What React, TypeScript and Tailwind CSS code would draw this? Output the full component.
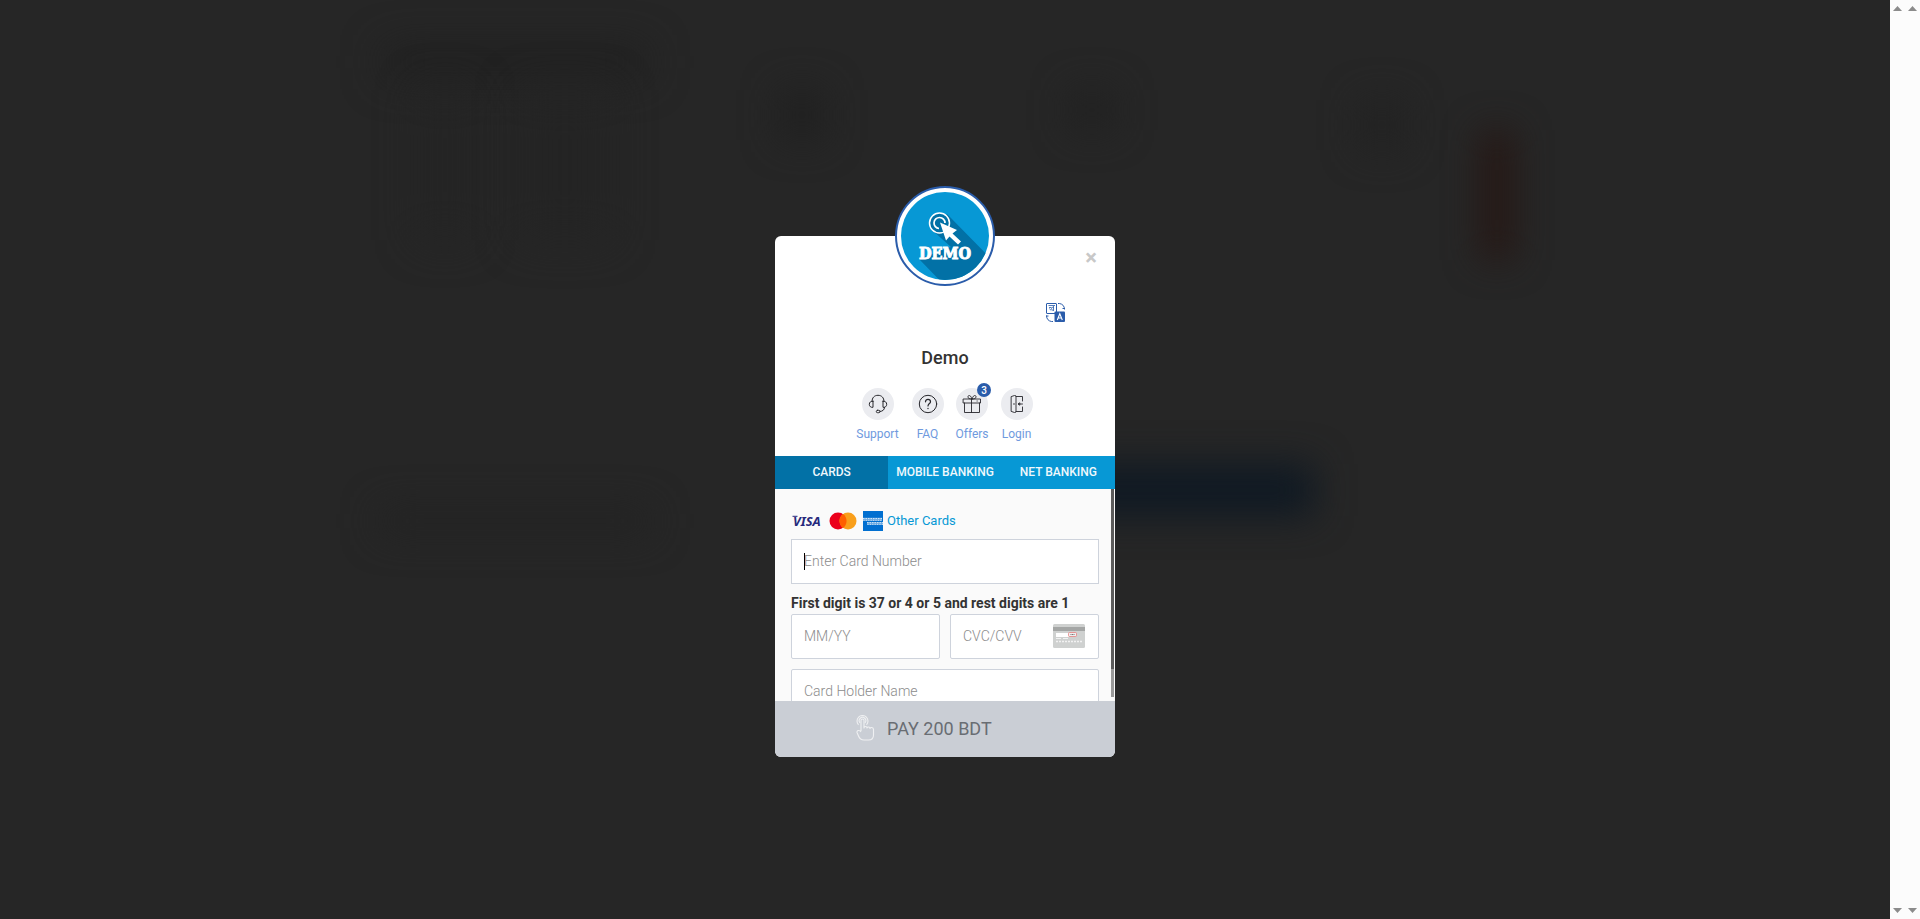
import React from "react";

const font = "font-['Roboto','Liberation_Sans',sans-serif]";

function Backdrop() {
  return (
    <div aria-hidden="true" className="pointer-events-none absolute inset-0 overflow-hidden">
      <div className="absolute left-[385px] top-[48px] h-[28px] w-[260px] bg-[#1f1f1f] blur-[20px]" />
      <div className="absolute left-[780px] top-[90px] h-[50px] w-[44px] bg-[#202020] blur-[18px]" />
      <div className="absolute left-[1070px] top-[90px] h-[40px] w-[44px] bg-[#212121] blur-[18px]" />
      <div className="absolute left-[1360px] top-[100px] h-[50px] w-[44px] bg-[#222222] blur-[18px]" />
      <div className="absolute left-[420px] top-[90px] h-[150px] w-[50px] bg-[#242424] blur-[20px]" />
      <div className="absolute left-[520px] top-[90px] h-[150px] w-[90px] bg-[#242424] blur-[20px]" />
      <div className="absolute left-[1480px] top-[130px] h-[130px] w-[34px] bg-[#261815] blur-[17px]" />
      <div className="absolute left-[1030px] top-[464px] h-[52px] w-[284px] bg-[#0f1923] blur-[18px]" />
      <div className="absolute left-[380px] top-[508px] h-[26px] w-[270px] bg-[#232323] blur-[18px]" />
    </div>
  );
}

function Logo() {
  return (
    <div className="absolute left-1/2 top-0 size-[100px] -translate-x-1/2 -translate-y-1/2 rounded-full border-2 border-[#2a5caa] bg-white p-1">
      <svg viewBox="0 0 88 88" className="size-full" role="img" aria-label="Demo">
        <defs>
          <clipPath id="disc"><circle cx="44" cy="44" r="44" /></clipPath>
        </defs>
        <circle cx="44" cy="44" r="44" fill="#0798d5" />
        <g clipPath="url(#disc)">
          <path d="M46 22 100 77V100H50L18 67 50 55 31 38Z" fill="#0271a6" />
        </g>
        <circle cx="38.500" cy="31" r="10" fill="#0271a6" stroke="#fff" strokeWidth="1.500" />
        <path d="M38 36.500A5.500 5.500 0 1 1 44 31" fill="none" stroke="#fff" strokeWidth="1.700" />
        <path d="M39 30.500 56 38 51.500 41.500 60 49.500 57 52.500 48.500 44.500 45 48.500Z" fill="#fff" />
        <text x="44" y="67" textAnchor="middle" fill="#fff" stroke="#fff" strokeWidth="0.900" className="font-['DejaVu_Serif_Condensed','DejaVu_Serif',serif] text-[16px] font-bold">DEMO</text>
      </svg>
    </div>
  );
}

function TranslateIcon() {
  return (
    <svg viewBox="0 0 19 19" className="size-[19px]" fill="none" stroke="#2a5caa" strokeWidth="1">
      <rect x="0.500" y="0.500" width="10" height="10" rx="0.500" />
      <path d="M2.500 2.500H9M3 4.500H5.500M7.500 3V8M3.500 5.500 5 7.500M7.500 4.500C5 3.500 5 7 7 7.500" strokeWidth="0.800" />
      <path d="M12 0.500H13.500C16.500 1 18.500 3 18.500 6.500M16.500 5.500H19" />
      <path d="M7 18.500H5.500C2.500 18 0.500 16 0.500 12.500M0 13H2.500" />
      <rect x="8.500" y="8.500" width="10.500" height="10.500" rx="1" fill="#2a5caa" stroke="none" />
      <path d="M11.300 17 13.800 10.800 16.300 17M12.100 15H15.500" stroke="#fff" strokeWidth="1.100" />
    </svg>
  );
}

const iconProps = {
  viewBox: "0 0 20 20",
  className: "size-5",
  fill: "none",
  stroke: "#26262b",
  strokeWidth: 1,
  strokeLinecap: "round" as const,
  strokeLinejoin: "round" as const,
};

function SupportIcon() {
  return (
    <svg {...iconProps}>
      <path d="M4 7.500C4 3.500 6.500 1.300 10 1.300S16 3.500 16 7.500" />
      <path d="M5 7.200V13.300C3 13.600 1.300 12.500 1.300 10.300S3 7 5 7.200ZM15 7.200V13.300C17 13.600 18.700 12.500 18.700 10.300S17 7 15 7.200ZM16.500 13.500C16.500 16 14.500 17.300 12 17.500" />
      <rect x="8.300" y="16.300" width="3.700" height="2.400" rx="1.200" />
    </svg>
  );
}

function FaqIcon() {
  return (
    <svg {...iconProps}>
      <circle cx="10" cy="10" r="8.700" />
      <path d="M7.500 7.800C7.500 6.200 8.600 5.300 10 5.300S12.500 6.200 12.500 7.700C12.500 9.500 10 9.700 10 12" strokeWidth="1.200" />
      <path d="M10 14.300V14.600" strokeWidth="1.300" />
    </svg>
  );
}

function GiftIcon() {
  return (
    <svg {...iconProps} strokeWidth={0.9}>
      <path d="M1.500 5H18.500V9H1.500ZM2.500 9V18.500H17.500V9M9.500 5V18.500M15 7H15.300" />
      <path d="M9.500 5C8 5 5.500 4.500 6 2.500 6.500 .5 9.500 1.500 9.800 5M10.500 5C12 5 14.500 4.500 14 2.500 13.500 .5 10.500 1.500 10.200 5" />
    </svg>
  );
}

function LoginIcon() {
  return (
    <svg {...iconProps} strokeWidth={0.9}>
      <path d="M4.500 2.500 7.500 1.500Q9 1.200 9 2.500V17.500Q9 18.800 7.500 18.500L4.500 17.500ZM9 2.500H15.500V7M9 17.500H15.500V13M7 9.500V10.500" />
      <path d="M15.500 10H11.500M12.500 9 11 10 12.500 11Z" />
    </svg>
  );
}

const actions = [
  { label: "Support", Icon: SupportIcon, box: "w-[50px]" },
  { label: "FAQ", Icon: FaqIcon, box: "w-[50px]" },
  { label: "Offers", Icon: GiftIcon, box: "w-[39px]", badge: "3" },
  { label: "Login", Icon: LoginIcon, box: "w-[50px]" },
];

function CardBrands() {
  return (
    <div className="flex h-5 items-center">
      <svg viewBox="0 0 36 20" className="h-5 w-9" role="img" aria-label="Visa">
        <path d="M1.500 5.300H6.500" stroke="#26297c" strokeWidth="1" />
        <text x="2" y="15" fill="#26297c" className="font-['Noto_Sans','Open_Sans',sans-serif] text-[13px] font-bold italic">VISA</text>
      </svg>
      <svg viewBox="0 0 28 18" className="ml-[2px] h-[18px] w-7" role="img" aria-label="Mastercard">
        <circle cx="9" cy="9" r="8.500" fill="#eb001b" />
        <circle cx="19" cy="9" r="8.500" fill="#f99f1b" />
        <path d="M14 2.100A8.500 8.500 0 0 1 14 15.900 8.500 8.500 0 0 1 14 2.100Z" fill="#ff5f00" />
      </svg>
      <svg viewBox="0 0 20 20" className="ml-[6px] size-5" role="img" aria-label="American Express">
        <rect width="20" height="20" fill="#016fd0" />
        <path d="M0 8.300H19M4 12.500H20" stroke="#6ba9e2" strokeWidth="3.200" />
        <path d="M0 7.500H19M4 11.600H20" stroke="#cfe4f7" strokeWidth="1" strokeDasharray="1.500 1" />
        <path d="M0.500 9.300H19M4.500 13.400H20" stroke="#cfe4f7" strokeWidth="1" strokeDasharray="1 1.400" />
      </svg>
      <a href="#cards" className="ml-1 text-[13px] leading-5 text-[#0798d5]">Other Cards</a>
    </div>
  );
}

function CvvIcon() {
  return (
    <svg viewBox="0 0 32 24" className="absolute right-[14px] top-[10px] h-6 w-8">
      <rect width="32" height="24" rx="1.500" fill="#cfd1d0" />
      <rect y="3" width="32" height="4" fill="#a4a6a5" />
      <rect x="3" y="9" width="13" height="4" fill="#fff" />
      <rect x="15.500" y="8.500" width="8" height="4" rx="1" fill="#eee" stroke="#e88080" strokeWidth="0.800" />
      <path d="M17.500 10.500H22" stroke="#777" strokeWidth="1.200" strokeDasharray="1 .5" />
      <path d="M3 14.500H8M10 14.500H15" stroke="#f2f2f2" />
      <path d="M3 17.500H29" stroke="#f2f2f2" strokeWidth="1.600" strokeDasharray="2 1" />
    </svg>
  );
}

function TapIcon() {
  return (
    <svg viewBox="0 0 20 26" className="h-[26px] w-5" fill="none" stroke="#eff0f2" strokeWidth="1.100" strokeLinejoin="round">
      <path d="M6 16V5.500C6 3.500 9 3.500 9 5.500V13C9 11 12 11 12 13 12 11.500 15 11.500 15 13.500 15 12 18.500 12 18.500 14.500V20C18.500 23.500 16.500 25 13.500 25H9C6 25 4.500 23.500 3.500 21L2 17.500C1.500 15.500 4.500 14.500 6 17" />
      <path d="M3.500 9.800A5.500 5.500 0 1 1 11.500 9.800M5 7.800A3.300 3.300 0 1 1 10 7.800" />
    </svg>
  );
}

const field =
  "block h-[45px] w-full border border-[#ced3dc] bg-white px-3 pb-[2px] text-[14px] font-light text-[#333] caret-transparent outline-none placeholder:text-[#8c8c8c] placeholder:opacity-100";

function Rail() {
  return (
    <div className="flex w-[15px] flex-col items-center justify-between py-[6px]">
      <svg viewBox="0 0 9 5" className="h-[5px] w-[9px]"><path d="M4.500 0 9 5H0Z" fill="#8b8b8b" /></svg>
      <svg viewBox="0 0 9 5" className="h-[5px] w-[9px]"><path d="M0 0H9L4.500 5Z" fill="#8b8b8b" /></svg>
    </div>
  );
}

export default function App() {
  return (
    <div className={`flex min-h-screen bg-[#262626] ${font}`}>
      <main className="relative flex flex-1 items-center justify-center pt-[74px]">
        <Backdrop />
        <section className="relative w-[340px] rounded-[6px] bg-white" aria-label="Payment">
          <Logo />
          <header className="flex flex-col items-center">
            <div className="flex w-full justify-end pr-[15px] pt-[13px]">
              <button type="button" aria-label="Close" className="size-[18px] text-[22px] font-bold leading-[18px] text-[#c8c8c8]">×</button>
            </div>
            <div className="flex w-full justify-end pr-[50px] pt-[36px]">
              <button type="button" aria-label="Change language"><TranslateIcon /></button>
            </div>
            <h1 className="mt-[24px] text-[18px] font-medium leading-6 text-[#333]">Demo</h1>
          </header>
          <nav className="flex justify-center pl-1">
            {actions.map(({ label, Icon, box, badge }) => (
              <a key={label} href={`#${label.toLowerCase()}`} className={`flex flex-col items-center pt-[18px] ${box}`}>
                <span className="relative flex size-8 items-center justify-center rounded-full bg-[#ebecf0]">
                  <Icon />
                  {badge && (
                    <span className="absolute -right-[3px] -top-[5px] flex size-[14px] items-center justify-center rounded-full bg-[#2a5caa] text-[10px] font-medium text-white">{badge}</span>
                  )}
                </span>
                <span className="mt-1 text-[12px] leading-5 text-[#6f9ade]">{label}</span>
              </a>
            ))}
          </nav>
          <div role="tablist" className="mt-3 grid h-[33px] grid-cols-3 bg-[#0798d5] text-[12px] font-medium text-[#f0f8fc]">
            <button role="tab" aria-selected="true" className="bg-[#0271a6] pb-[2px]">CARDS</button>
            <button role="tab" aria-selected="false" className="pb-[2px]">MOBILE BANKING</button>
            <button role="tab" aria-selected="false" className="pb-[2px]">NET BANKING</button>
          </div>
          <div className="relative h-[212px] overflow-hidden bg-[#fafafa] px-4 pt-[22px]">
            <CardBrands />
            <div className="relative mt-2">
              <input autoFocus aria-label="Card number" placeholder="Enter Card Number" className={field} />
              <span aria-hidden="true" className="absolute left-[13px] top-[14px] h-[17px] w-px bg-black" />
            </div>
            <p className="mt-[9px] text-[14px] font-bold leading-5 text-[#333]">First digit is 37 or 4 or 5 and rest digits are 1</p>
            <div className="mt-px grid grid-cols-2 gap-[10px]">
              <input aria-label="Expiry" placeholder="MM/YY" className={`rounded-[2px] ${field}`} />
              <div className="relative">
                <input aria-label="Security code" placeholder="CVC/CVV" className={`rounded-[2px] ${field}`} />
                <CvvIcon />
              </div>
            </div>
            <input aria-label="Card holder name" placeholder="Card Holder Name" className={`mt-[10px] rounded-[2px] ${field}`} />
            <div aria-hidden="true" className="absolute right-[1px] top-0 h-[208px] w-[3px] bg-[#999]">
              <div className="h-[180px] bg-[#5c5c5c]" />
            </div>
          </div>
          <button type="button" className="flex h-14 w-full items-center gap-3 rounded-b-[6px] bg-[#caced5] pb-[2px] pl-[80px] text-[18px] text-[#696d73]">
            <TapIcon />
            PAY 200 BDT
          </button>
        </section>
      </main>
      <div aria-hidden="true" className="flex bg-[#fcfcfc]">
        <Rail />
        <Rail />
      </div>
    </div>
  );
}
